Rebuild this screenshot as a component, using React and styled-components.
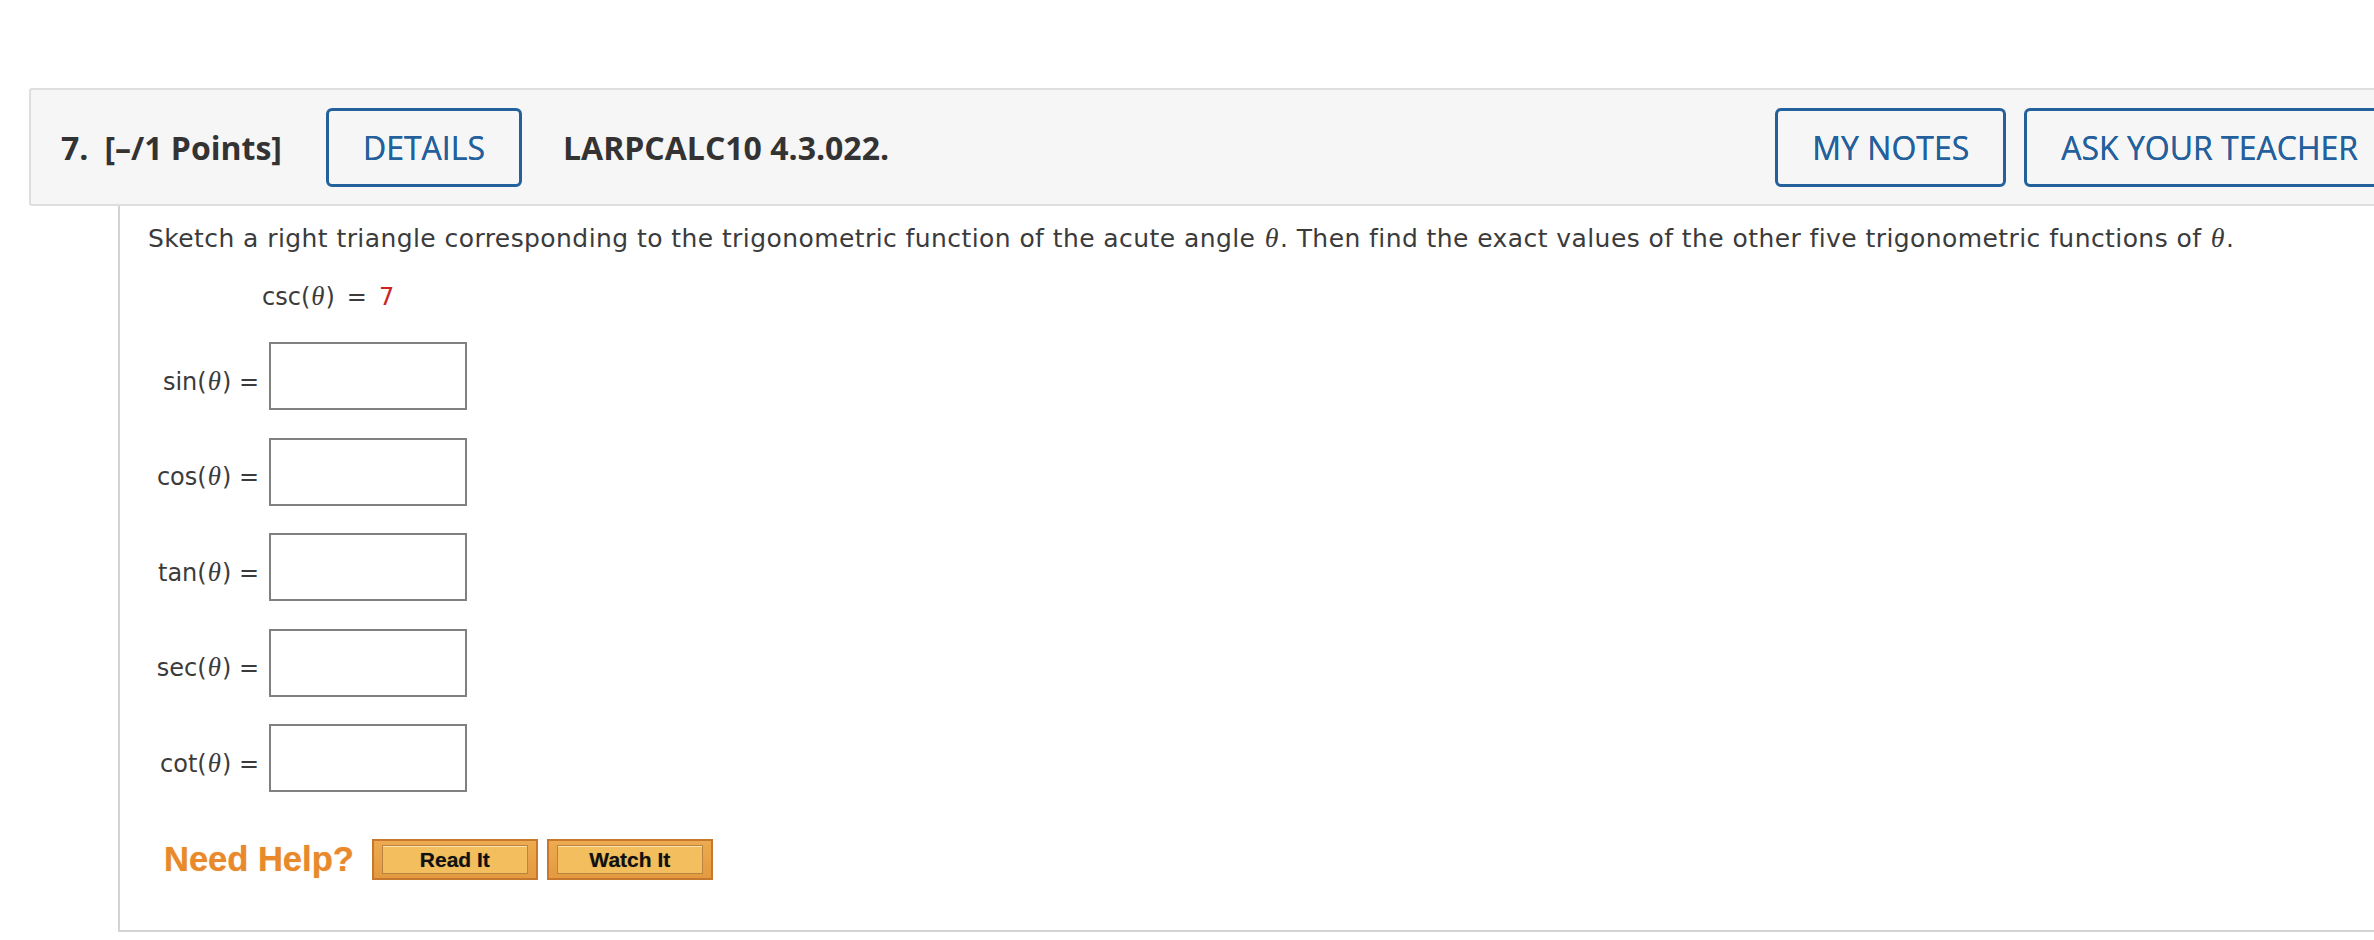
import React from 'react';
import styled, { createGlobalStyle } from 'styled-components';

const GlobalStyle = createGlobalStyle`
    html, body {
        margin: 0;
        padding: 0;
        background: #fff;
        overflow: hidden;
    }
`;

const Page = styled.div`
    padding: 88px 0 0 29px;
    width: 2430px;
    box-sizing: border-box;
`;

const Header = styled.div`
    display: flex;
    align-items: center;
    box-sizing: border-box;
    width: 2400px;
    height: 118px;
    padding: 0 32px 0 30px;
    background: #f6f6f6;
    border: 2px solid #dedede;
    border-radius: 3px;
    font-family: 'Open Sans', sans-serif;
    font-size: 32px;
    color: #333;
`;

const Number = styled.span`
    font-weight: 700;
    margin-right: 16px;
`;

const Points = styled.span`
    font-weight: 700;
    margin-right: 44px;
`;

const Code = styled.span`
    font-weight: 700;
    margin-left: 41px;
`;

const HeaderButton = styled.button`
    box-sizing: border-box;
    height: 79px;
    padding: 0 34px;
    margin-left: ${({ push }) => (push ? 'auto' : '0')};
    margin-right: ${({ gap }) => gap || 0}px;
    background: transparent;
    border: 3px solid #24609b;
    border-radius: 6px;
    font-family: 'Open Sans', sans-serif;
    font-size: 32px;
    color: #24609b;
    white-space: nowrap;
    cursor: pointer;
    text-shadow: 0 0 0.4px #24609b;
`;

const QuestionBody = styled.div`
    margin-left: 89px;
    width: 2311px;
    box-sizing: border-box;
    padding: 14px 0 50px 28px;
    border-left: 2px solid #d3d3d3;
    border-bottom: 2px solid #d3d3d3;
    font-family: 'DejaVu Sans', Verdana, sans-serif;
    font-size: 24px;
    color: #3b3b3b;
`;

const Prompt = styled.p`
    margin: 0;
    font-size: 25px;
    letter-spacing: 0.42px;
    line-height: 36px;
    white-space: nowrap;
`;

const Given = styled.div`
    margin: 21px 0 0 114px;
    line-height: 36px;
`;

const Theta = styled.i`
    font-family: 'Liberation Serif', 'DejaVu Serif', serif;
    font-size: 1.12em;
    font-style: italic;
    padding: 0 1px;
`;

const Eq = styled.span`
    margin: 0 ${({ spaced }) => (spaced ? '12px' : '0')};
`;

const Value = styled.span`
    color: #cc2222;
`;

const Answers = styled.div`
    display: grid;
    grid-template-columns: 111px 198px;
    column-gap: 10px;
    row-gap: 27.5px;
    margin-top: 27px;
`;

const Label = styled.label`
    justify-self: end;
    align-self: center;
    margin-top: 10px;
    white-space: nowrap;
    line-height: 36px;
`;

const AnswerBox = styled.input`
    box-sizing: border-box;
    width: 198px;
    height: 68px;
    margin: 0;
    border: 2px solid #808080;
    background: #fff;
    font-size: 22px;
    padding: 4px 8px;
    outline: none;
`;

const HelpRow = styled.div`
    display: flex;
    align-items: center;
    margin: 47px 0 0 16px;
`;

const NeedHelp = styled.span`
    font-family: 'Liberation Sans', Arial, sans-serif;
    font-weight: 700;
    font-size: 34.5px;
    color: #e8892b;
    text-shadow: 0 0 1px rgba(232, 137, 43, 0.6);
    margin-right: 18px;
`;

const HelpButton = styled.button`
    box-sizing: border-box;
    width: 166px;
    height: 41px;
    margin-right: 9px;
    padding: 4px 8px;
    background: linear-gradient(#eeaa50, #e39a40);
    border: 2px solid #c6782d;
    cursor: pointer;
    display: flex;
`;

const HelpButtonFace = styled.span`
    flex: 1;
    display: flex;
    align-items: center;
    justify-content: center;
    background: #f3bf5e;
    border: 1px solid #b9843f;
    box-shadow: inset 0 1px 0 #fde3aa;
    font-family: 'Liberation Sans', Arial, sans-serif;
    font-weight: 700;
    font-size: 21px;
    color: #111;
    text-shadow: 0 0 1px rgba(0, 0, 0, 0.35);
`;

const functions = ['sin', 'cos', 'tan', 'sec', 'cot'];

const App = () => (
    <>
        <GlobalStyle />
        <Page>
            <Header>
                <Number>7.</Number>
                <Points>[–/1 Points]</Points>
                <HeaderButton>DETAILS</HeaderButton>
                <Code>LARPCALC10 4.3.022.</Code>
                <HeaderButton push gap={18}>MY NOTES</HeaderButton>
                <HeaderButton>ASK YOUR TEACHER</HeaderButton>
            </Header>
            <QuestionBody>
                <Prompt>
                    Sketch a right triangle corresponding to the trigonometric function of the acute angle <Theta>θ</Theta>. Then find the exact values of the other five trigonometric functions of <Theta>θ</Theta>.
                </Prompt>
                <Given>
                    csc(<Theta>θ</Theta>)<Eq spaced>=</Eq><Value>7</Value>
                </Given>
                <Answers>
                    {functions.map((fn) => (
                        <React.Fragment key={fn}>
                            <Label htmlFor={`ans-${fn}`}>
                                {fn}(<Theta>θ</Theta>) <Eq>=</Eq>
                            </Label>
                            <AnswerBox id={`ans-${fn}`} type="text" />
                        </React.Fragment>
                    ))}
                </Answers>
                <HelpRow>
                    <NeedHelp>Need Help?</NeedHelp>
                    <HelpButton><HelpButtonFace>Read It</HelpButtonFace></HelpButton>
                    <HelpButton><HelpButtonFace>Watch It</HelpButtonFace></HelpButton>
                </HelpRow>
            </QuestionBody>
        </Page>
    </>
);

export default App;
